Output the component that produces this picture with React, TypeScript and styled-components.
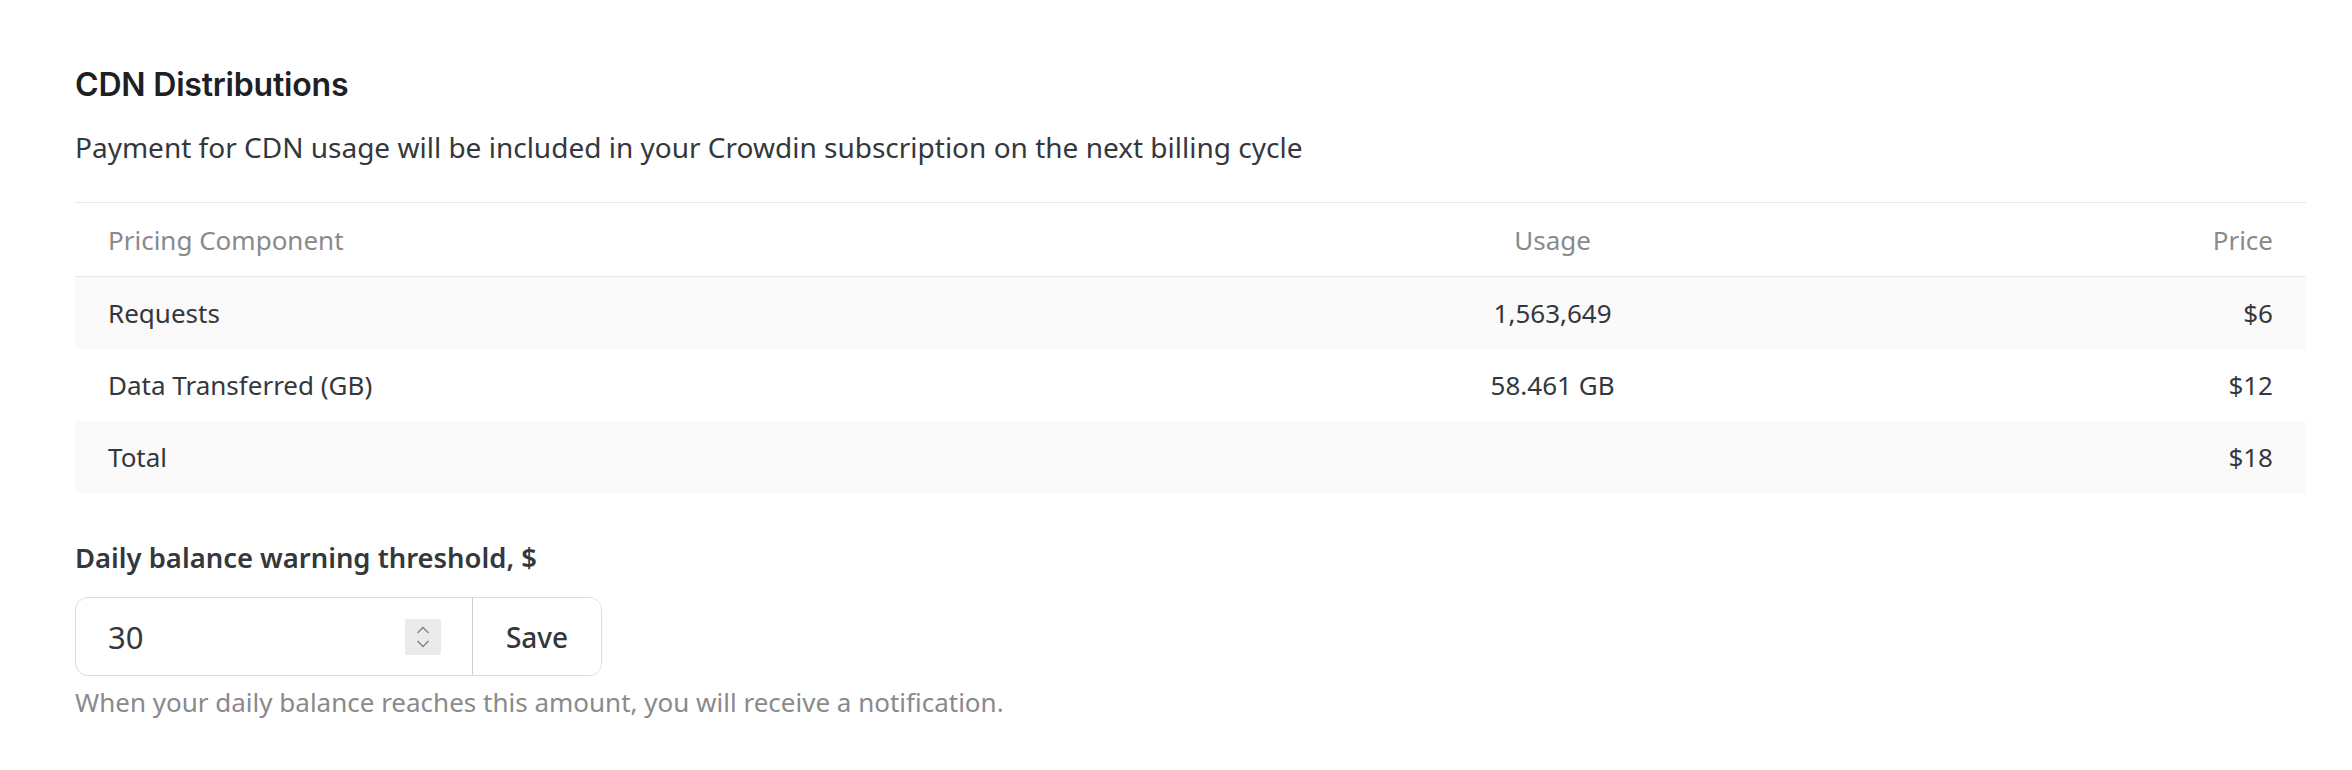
import React from "react";
import styled, { createGlobalStyle } from "styled-components";

const GlobalStyle = createGlobalStyle`
  html, body { margin: 0; padding: 0; background: #ffffff; }
  body { font-family: "Noto Sans", "Open Sans", sans-serif; color: #333333; }
  * { box-sizing: border-box; }
`;

const Page = styled.main`
  padding: 67px 46px 40px 75px;
  display: flex;
  flex-direction: column;
`;

const Title = styled.h2`
  margin: 0;
  font-family: "Inter", "Noto Sans", sans-serif;
  font-weight: 600;
  font-size: 32px;
  line-height: 36px;
  letter-spacing: -0.2px;
  color: #1d2125;
`;

const Subtitle = styled.p`
  margin: 26px 0 0;
  font-size: 28px;
  line-height: 36px;
  color: #34383c;
`;

const Table = styled.div`
  margin-top: 37px;
  border-top: 1.5px solid #e8e8e8;
  display: flex;
  flex-direction: column;
`;

const Row = styled.div<{ $head?: boolean; $striped?: boolean }>`
  display: grid;
  grid-template-columns: 50.5% 32.45% 1fr;
  align-items: center;
  height: ${(p) => (p.$head ? "74px" : "72px")};
  padding: 0 33px;
  background: ${(p) => (p.$striped ? "#fafafa" : "#ffffff")};
  border-bottom: ${(p) => (p.$head ? "1.5px solid #e8e8e8" : "none")};
  color: ${(p) => (p.$head ? "#8a8a8a" : "#34383c")};
  font-size: 26px;
  line-height: 32px;
`;

const Cell = styled.div<{ $align?: "left" | "center" | "right" }>`
  text-align: ${(p) => p.$align ?? "left"};
  white-space: nowrap;
`;

const FieldLabel = styled.label`
  margin-top: 48px;
  font-size: 27.4px;
  line-height: 34px;
  font-weight: 600;
  color: #34383c;
`;

const InputGroup = styled.div`
  margin-top: 22px;
  display: flex;
  width: 527px;
  height: 79px;
  border: 1.5px solid #dcdcdc;
  border-radius: 13px;
  overflow: hidden;
`;

const InputBox = styled.div`
  flex: 1;
  min-width: 0;
  display: flex;
  align-items: center;
  padding: 0 31px 0 32px;
  border-right: 1.5px solid #cfcfcf;
`;

const NumberInput = styled.input`
  flex: 1;
  min-width: 0;
  width: 0;
  border: none;
  outline: none;
  background: transparent;
  font-family: "Noto Sans", sans-serif;
  font-size: 31px;
  color: #34383c;
  padding: 0;
`;

const Spinner = styled.div`
  flex: none;
  width: 36px;
  height: 36px;
  background: #ebebeb;
  border-radius: 2px;
  display: flex;
  align-items: center;
  justify-content: center;
`;

const SaveButton = styled.button`
  flex: none;
  width: 128px;
  border: none;
  background: #ffffff;
  font-family: "Noto Sans", sans-serif;
  font-size: 28px;
  font-weight: 500;
  color: #34383c;
  cursor: pointer;
  padding: 0;
`;

const Help = styled.p`
  margin: 10px 0 0;
  font-size: 26px;
  line-height: 32px;
  color: #8a8a8a;
`;

const rows = [
  { name: "Requests", usage: "1,563,649", price: "$6" },
  { name: "Data Transferred (GB)", usage: "58.461 GB", price: "$12" },
  { name: "Total", usage: "", price: "$18" },
];

export default function App() {
  return (
    <>
      <GlobalStyle />
      <Page>
        <Title>CDN Distributions</Title>
        <Subtitle>
          Payment for CDN usage will be included in your Crowdin subscription on the next billing cycle
        </Subtitle>
        <Table>
          <Row $head>
            <Cell>Pricing Component</Cell>
            <Cell $align="center">Usage</Cell>
            <Cell $align="right">Price</Cell>
          </Row>
          {rows.map((r, i) => (
            <Row key={r.name} $striped={i % 2 === 0}>
              <Cell>{r.name}</Cell>
              <Cell $align="center">{r.usage}</Cell>
              <Cell $align="right">{r.price}</Cell>
            </Row>
          ))}
        </Table>
        <FieldLabel htmlFor="threshold">Daily balance warning threshold, $</FieldLabel>
        <InputGroup>
          <InputBox>
            <NumberInput id="threshold" type="text" defaultValue="30" />
            <Spinner>
              <svg width="16" height="26" viewBox="0 0 16 26" fill="none" stroke="#8c8c8c" strokeWidth="1.7" strokeLinecap="round" strokeLinejoin="round">
                <path d="M3 8.5 L8 3.5 L13 8.5" />
                <path d="M3 17.5 L8 22.5 L13 17.5" />
              </svg>
            </Spinner>
          </InputBox>
          <SaveButton type="button">Save</SaveButton>
        </InputGroup>
        <Help>When your daily balance reaches this amount, you will receive a notification.</Help>
      </Page>
    </>
  );
}
